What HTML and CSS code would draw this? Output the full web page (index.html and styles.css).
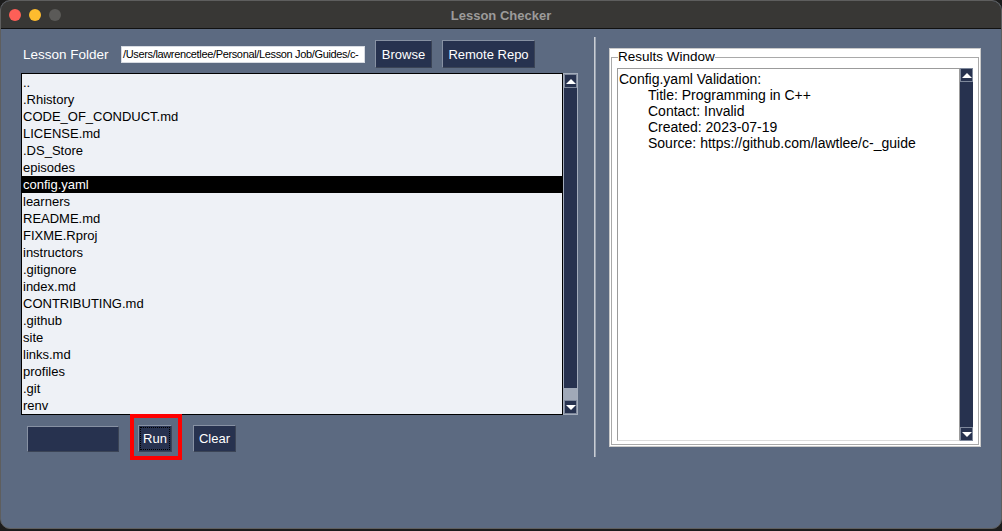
FILE: index.html
```html
<!DOCTYPE html>
<html>
<head>
<meta charset="utf-8">
<link rel="stylesheet" href="styles.css">
</head>
<body>
<div class="window">
  <div class="titlebar">
    <div class="lights">
      <span class="light red"></span>
      <span class="light yellow"></span>
      <span class="light gray"></span>
    </div>
    <div class="title">Lesson Checker</div>
    <div></div>
  </div>
  <div class="content">
    <div class="left">
      <div class="toprow">
        <span class="label">Lesson Folder</span>
        <div class="path">/Users/lawrencetlee/Personal/Lesson Job/Guides/c-</div>
        <button class="btn browse">Browse</button>
        <button class="btn remote">Remote Repo</button>
      </div>
      <div class="listwrap">
        <ul class="list">
          <li>..</li>
          <li>.Rhistory</li>
          <li>CODE_OF_CONDUCT.md</li>
          <li>LICENSE.md</li>
          <li>.DS_Store</li>
          <li>episodes</li>
          <li class="sel">config.yaml</li>
          <li>learners</li>
          <li>README.md</li>
          <li>FIXME.Rproj</li>
          <li>instructors</li>
          <li>.gitignore</li>
          <li>index.md</li>
          <li>CONTRIBUTING.md</li>
          <li>.github</li>
          <li>site</li>
          <li>links.md</li>
          <li>profiles</li>
          <li>.git</li>
          <li>renv</li>
        </ul>
        <div class="scroll">
          <div class="arrow up"></div>
          <div class="track">
            <div class="thumb"></div>
          </div>
          <div class="arrow down"></div>
        </div>
      </div>
      <div class="bottomrow">
        <div class="entry"></div>
        <div class="runwrap"><button class="btn run"><span>Run</span></button></div>
        <button class="btn clear">Clear</button>
      </div>
    </div>
    <div class="sep"></div>
    <div class="frame">
      <fieldset class="results">
        <legend>Results Window</legend>
        <div class="textwrap">
          <div class="text">
            <div>Config.yaml Validation:</div>
            <div class="ind">Title: Programming in C++</div>
            <div class="ind">Contact: Invalid</div>
            <div class="ind">Created: 2023-07-19</div>
            <div class="ind">Source: https://github.com/lawtlee/c-_guide</div>
          </div>
          <div class="scroll rs">
            <div class="arrow up"></div>
            <div class="track dark"></div>
            <div class="arrow down"></div>
          </div>
        </div>
      </fieldset>
    </div>
  </div>
</div>
</body>
</html>
```

FILE: styles.css
```css
* { box-sizing: border-box; }
html, body {
  margin: 0;
  padding: 0;
  background: #1c1c1c;
  width: 1002px;
  height: 531px;
  overflow: hidden;
  font-family: "Liberation Sans", Arial, sans-serif;
}
.window {
  width: 1002px;
  height: 529px;
  border-radius: 10px;
  overflow: hidden;
  border: 1px solid #5e5e5e;
  display: flex;
  flex-direction: column;
  background: #5c6a81;
}
.titlebar {
  height: 28px;
  flex: none;
  background: #383735;
  border-bottom: 1px solid #111;
  display: grid;
  grid-template-columns: 1fr auto 1fr;
  align-items: center;
}
.lights {
  display: flex;
  gap: 8px;
  padding-left: 8px;
}
.light {
  width: 12px;
  height: 12px;
  border-radius: 50%;
  display: block;
}
.light.red { background: #fe5f57; }
.light.yellow { background: #febc2e; }
.light.gray { background: #5b5a58; }
.title {
  color: #9c9b9a;
  font-weight: bold;
  font-size: 13px;
  padding-top: 1px;
}
.content {
  flex: 1;
  display: flex;
  align-items: flex-start;
  padding-left: 20px;
}
.left {
  width: 557px;
  padding-top: 11px;
  display: flex;
  flex-direction: column;
}
.toprow {
  display: flex;
  align-items: center;
  height: 28px;
}
.label {
  color: #fff;
  font-size: 13.5px;
  margin-left: 2px;
  width: 98px;
}
.path {
  width: 244px;
  height: 17px;
  background: #fff;
  border: 1px solid #d7dbe2;
  font-size: 11px;
  line-height: 15px;
  color: #000;
  white-space: nowrap;
  overflow: hidden;
  padding-left: 1px;
  letter-spacing: -0.35px;
}
.btn {
  font-family: inherit;
  background: #27324f;
  color: #fff;
  font-size: 13px;
  border: 1px solid #8791a3;
  border-right-color: #3b4456;
  border-bottom-color: #3b4456;
  height: 28px;
  padding: 0;
  margin: 0;
}
.browse { width: 57px; margin-left: 10px; }
.remote { width: 93px; margin-left: 10px; }
.listwrap {
  margin-top: 5px;
  display: flex;
  height: 342px;
}
.list {
  list-style: none;
  margin: 0;
  padding: 0;
  width: 543px;
  height: 342px;
  background: #eef1f6;
  border: 1px solid #000;
  font-size: 13px;
  color: #000;
  overflow: hidden;
}
.list li {
  height: 17px;
  line-height: 17px;
  padding-left: 1px;
}
.list li.sel {
  background: #000;
  color: #fff;
}
.scroll {
  width: 15px;
  border: 1px solid #a3acbb;
  display: flex;
  flex-direction: column;
  background: #a0a9b8;
}
.arrow {
  height: 14px;
  flex: none;
  background: #27324f;
  border: 1px solid #7e889b;
  display: flex;
  align-items: center;
  justify-content: center;
}
.arrow::before {
  content: "";
  width: 0;
  height: 0;
  border-left: 5px solid transparent;
  border-right: 5px solid transparent;
}
.arrow.up::before { border-bottom: 5px solid #fff; }
.arrow.down::before { border-top: 5px solid #fff; }
.track {
  flex: 1;
  display: flex;
  flex-direction: column;
}
.thumb {
  height: 300px;
  background: #27324f;
}
.track.dark { background: #27324f; }
.bottomrow {
  display: flex;
  align-items: center;
  margin-top: 10px;
  height: 27px;
}
.entry {
  width: 92px;
  height: 26px;
  margin-left: 6px;
  background: #27324f;
  border: 1px solid #8791a3;
  border-right-color: #3b4456;
  border-bottom-color: #3b4456;
}
.runwrap {
  position: relative;
  margin-left: 19px;
}
.runwrap::after {
  content: "";
  position: absolute;
  left: -8px;
  top: -11px;
  right: -10px;
  bottom: -8px;
  border: 4px solid #fe0000;
  pointer-events: none;
}
.run {
  width: 34px;
  height: 27px;
  display: flex;
  align-items: center;
  justify-content: center;
  padding: 2px;
}
.run span {
  display: flex;
  align-items: center;
  justify-content: center;
  width: 100%;
  height: 100%;
  outline: 1px dotted #000;
}
.clear { width: 43px; height: 27px; margin-left: 21px; }
.sep {
  width: 2px;
  height: 420px;
  margin-top: 8px;
  margin-left: 16px;
  background: #c9cdd4;
  border-right: 1px solid #9aa3b1;
}
.frame {
  margin-top: 19px;
  margin-left: 13px;
  width: 372px;
  height: 399px;
  background: #fff;
  border: 1px solid #c9c9c9;
  padding: 0 1px 1px 1px;
}
.results {
  margin: 0;
  height: 100%;
  border: 1px solid #a9a9a9;
  padding: 3px 5px 2px 5px;
  display: flex;
}
.results legend {
  padding: 0;
  margin-left: 1px;
  font-size: 13.5px;
  line-height: 16px;
  color: #000;
}
.textwrap {
  display: flex;
  width: 100%;
  height: 373px;
}
.text {
  flex: 1;
  border: 1px solid #9b9b9b;
  border-bottom-color: #dcdcdc;
  padding: 2px 0 0 1px;
  font-size: 14px;
  line-height: 16px;
  color: #000;
}
.text .ind { padding-left: 29px; }
.scroll.rs {
  width: 13px;
  border: none;
  background: #27324f;
}
```
